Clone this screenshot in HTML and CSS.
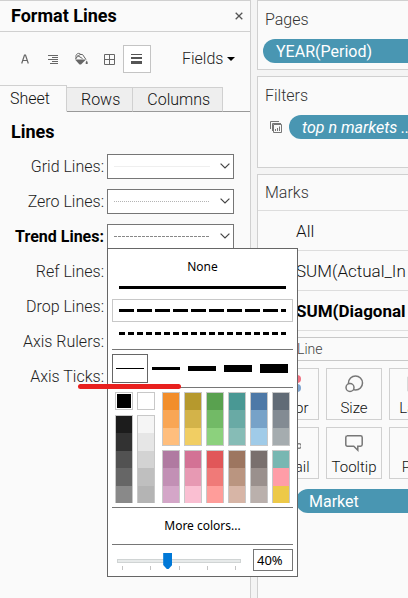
FILE: index.html
```html
<!DOCTYPE html>
<html lang="en">
<head>
<meta charset="utf-8">
<meta name="viewport" content="width=device-width, initial-scale=1">
<title>Format Lines</title>
<link rel="stylesheet" href="styles.css">
</head>
<body>
<svg class="defs" aria-hidden="true">
  <symbol id="chevron" viewBox="0 0 10 6"><path d="M.6 .6 5 5 9.400 .6" fill="none" stroke="#444" stroke-width="1.200"/></symbol>
</svg>
<main class="app">
  <section class="format">
    <header class="format-head">
      <h1>Format Lines</h1>
      <button class="close" aria-label="Close"><svg width="8" height="8" viewBox="0 0 8 8"><path d="M.7.7 7.300 7.300M7.300.7.7 7.300" stroke="#555" stroke-width="1.300"/></svg></button>
    </header>
    <div class="toolbar">
      <button class="tool" aria-label="Font"><svg width="14" height="14" viewBox="0 0 14 14"><path d="M3.700 11.500 6.500 3h1l2.800 8.500M4.600 8.500h4.800" fill="none" stroke="#666" stroke-width="1.200"/></svg></button>
      <button class="tool" aria-label="Alignment"><svg width="14" height="14" viewBox="0 0 14 14"><path d="M2 3.500h10M6 5.500h6M2 7.500h10M6 9.500h6M4 11.500h8" stroke="#666"/></svg></button>
      <button class="tool" aria-label="Shading"><svg width="14" height="14" viewBox="0 0 14 14"><path d="M1 7.500h11L7 12.500 5.500 12.500Z" fill="#666"/><path d="M2 7V3.500C3 .8 6 .8 7 2.800M1.500 6.500 6 2.500h2.500L12 7.500M3.500 3.500l5 3" fill="none" stroke="#666"/><path d="M12.700 8.500q2.200 3.500 0 3.500t0-3.500" fill="#666"/></svg></button>
      <button class="tool" aria-label="Borders"><svg width="14" height="14" viewBox="0 0 14 14"><path d="M2.500 2.500h10v10h-10zM7.500 2.500v10M2.500 7.500h10" fill="none" stroke="#666"/></svg></button>
      <button class="tool active" aria-label="Lines"><svg width="14" height="14" viewBox="0 0 14 14"><path d="M1 2h11v1H1zM1 5h11v2H1zM1 9h11v3H1z" fill="#555"/></svg></button>
      <button class="fields">Fields<svg width="8" height="4" viewBox="0 0 8 4"><path d="M0 0h8L4 4z"/></svg></button>
    </div>
    <nav class="tabs">
      <button class="tab current">Sheet</button>
      <button class="tab">Rows</button>
      <button class="tab">Columns</button>
      <span class="tab-rest"></span>
    </nav>
    <h2>Lines</h2>
    <div class="rows">
      <div class="row"><label for="grid">Grid Lines:</label>
        <div class="combo"><select id="grid"><option aria-label="Automatic"></option></select><i class="sample solid"></i><svg class="chev"><use href="#chevron"/></svg></div></div>
      <div class="row"><label for="zero">Zero Lines:</label>
        <div class="combo"><select id="zero"><option aria-label="Dotted"></option></select><i class="sample dotted"></i><svg class="chev"><use href="#chevron"/></svg></div></div>
      <div class="row"><label for="trend" class="strong">Trend Lines:</label>
        <div class="combo"><select id="trend"><option aria-label="Dashed"></option></select><i class="sample dashed"></i><svg class="chev"><use href="#chevron"/></svg>
          <div class="popup">
            <button class="none">None</button>
            <button class="style" aria-label="Solid"><i class="rule"></i></button>
            <button class="style picked" aria-label="Dashed"><i class="rule dash"></i></button>
            <button class="style" aria-label="Dotted"><i class="rule dot"></i></button>
            <hr>
            <div class="weights">
              <button class="picked" aria-label="Weight 1"><i class="w1"></i></button>
              <button aria-label="Weight 2"><i class="w2"></i></button>
              <button aria-label="Weight 3"><i class="w3"></i></button>
              <button aria-label="Weight 4"><i class="w4"></i></button>
              <button aria-label="Weight 5"><i class="w5"></i></button>
            </div>
            <hr>
            <div class="palette">
              <div class="grays">
                <button class="chip black" aria-label="Black"></button>
                <button class="chip" aria-label="White"></button>
                <div class="strip open"><b class="k1"></b><b class="k2"></b><b class="k3"></b><b class="k4"></b><b class="k5"></b></div>
                <div class="strip open"><b class="l1"></b><b class="l2"></b><b class="l3"></b><b class="l4"></b><b class="l5"></b></div>
              </div>
              <div class="hues">
                <div class="strip"><b class="or1"></b><b class="or2"></b><b class="or3"></b></div>
                <div class="strip"><b class="ye1"></b><b class="ye2"></b><b class="ye3"></b></div>
                <div class="strip"><b class="gr1"></b><b class="gr2"></b><b class="gr3"></b></div>
                <div class="strip"><b class="te1"></b><b class="te2"></b><b class="te3"></b></div>
                <div class="strip"><b class="bl1"></b><b class="bl2"></b><b class="bl3"></b></div>
                <div class="strip"><b class="sl1"></b><b class="sl2"></b><b class="sl3"></b></div>
                <div class="strip open"><b class="pu1"></b><b class="pu2"></b><b class="pu3"></b></div>
                <div class="strip open"><b class="pi1"></b><b class="pi2"></b><b class="pi3"></b></div>
                <div class="strip open"><b class="re1"></b><b class="re2"></b><b class="re3"></b></div>
                <div class="strip open"><b class="br1"></b><b class="br2"></b><b class="br3"></b></div>
                <div class="strip open"><b class="ta1"></b><b class="ta2"></b><b class="ta3"></b></div>
                <div class="strip open"><b class="mx1"></b><b class="mx2"></b><b class="mx3"></b></div>
              </div>
            </div>
            <hr>
            <button class="more">More colors...</button>
            <hr>
            <div class="opacity">
              <div class="slider">
                <input type="range" min="0" max="100" value="40" aria-label="Opacity">
                <div class="ticks"><i></i><i></i><i></i><i></i><i></i></div>
              </div>
              <input class="percent" type="text" value="40%" aria-label="Opacity percent">
            </div>
            <span class="underline"></span>
          </div>
        </div></div>
      <div class="row"><label for="ref">Ref Lines:</label>
        <div class="combo"><select id="ref"><option aria-label="Automatic"></option></select></div></div>
      <div class="row"><label for="drop">Drop Lines:</label>
        <div class="combo"><select id="drop"><option aria-label="Automatic"></option></select></div></div>
      <div class="row"><label for="rulers">Axis Rulers:</label>
        <div class="combo"><select id="rulers"><option aria-label="Automatic"></option></select></div></div>
      <div class="row"><label for="axis">Axis Ticks:</label>
        <div class="combo"><select id="axis"><option aria-label="Automatic"></option></select></div></div>
    </div>
  </section>
  <aside class="shelves">
    <section class="card pages">
      <h3>Pages</h3>
      <div class="pill">YEAR(Period)</div>
    </section>
    <section class="card filters">
      <h3>Filters</h3>
      <div class="filter">
        <svg width="12" height="12" viewBox="0 0 12 12"><path d="M.5 8V.5H9M2.500 10V2.500H11" fill="none" stroke="#777"/><path d="M3.500 3.500h8v8h-8zM5.500 10V8M7.500 10V7M9.500 10V5.500" fill="none" stroke="#777"/></svg>
        <div class="pill italic">top n markets ...</div>
      </div>
    </section>
    <section class="card marks">
      <h3>Marks</h3>
      <button class="mark">All</button>
      <button class="mark">SUM(Actual_In</button>
      <button class="mark strong">SUM(Diagonal</button>
      <select class="type" aria-label="Mark type"><option>Line</option></select>
      <div class="tiles">
        <button class="tile"><svg width="20" height="20" viewBox="0 0 20 20"><circle cx="5" cy="5" r="4" fill="#f4a259"/><circle cx="16" cy="5" r="4" fill="#f07182"/><circle cx="5" cy="15" r="4" fill="#6aaf6a"/><circle cx="16" cy="14" r="4" fill="#7da3d0"/></svg>Color</button>
        <button class="tile"><svg width="20" height="20" viewBox="0 0 20 20"><circle cx="11.500" cy="9" r="7" fill="none" stroke="#777" stroke-width="1.500"/><circle cx="6" cy="13.500" r="4" fill="#fafafa" stroke="#777" stroke-width="1.500"/></svg>Size</button>
        <button class="tile"><svg width="20" height="20" viewBox="0 0 20 20"><path d="M1.500 3.500h17v13h-17z" fill="none" stroke="#777" stroke-width="1.500"/></svg>Label</button>
        <button class="tile"><svg width="20" height="20" viewBox="0 0 20 20"><circle cx="5" cy="6" r="2.500" fill="none" stroke="#777" stroke-width="1.200"/><circle cx="12" cy="6" r="2.500" fill="none" stroke="#777" stroke-width="1.200"/><circle cx="18" cy="13" r="2.300" fill="none" stroke="#777" stroke-width="1.200"/></svg>Detail</button>
        <button class="tile"><svg width="20" height="20" viewBox="0 0 20 20"><path d="M3 2.800h13.500q1.700 0 1.700 1.700v7q0 1.700-1.700 1.700h-2.700v4l-4-4H3.500q-1.700 0-1.700-1.700v-7Q1.800 2.800 3.500 2.800Z" fill="none" stroke="#777" stroke-width="1.500"/></svg>Tooltip</button>
        <button class="tile"><svg width="20" height="20" viewBox="0 0 20 20"><path d="M2 13.500 7 10l5 3 6-9" fill="none" stroke="#777" stroke-width="1.500"/></svg>Path</button>
      </div>
      <div class="pill market">Market</div>
    </section>
  </aside>
</main>
</body>
</html>
```
FILE: styles.css
```css
* { box-sizing: border-box; }
body { margin: 0; background: #f4f4f4; color: #222; font: 300 16px/20px Roboto, "Liberation Sans", sans-serif; }
button, select, input { font: inherit; color: inherit; margin: 0; padding: 0; border: 0; background: none; border-radius: 0; }
h1, h2, h3 { margin: 0; font-size: 16px; line-height: 20px; }
svg { display: block; flex: none; }
.defs { position: absolute; width: 0; height: 0; }
.app { display: flex; gap: 6px; min-height: 100vh; overflow: hidden; }
.strong { font-weight: 700; color: #000; }

.format { flex: 0 0 251px; background: #fafafa; border: solid #d0d0d0; border-width: 1px 1px 0 0; }
.format-head { display: flex; align-items: center; justify-content: space-between; height: 31px; padding: 0 7px 0 11px; border-bottom: 1px solid #d0d0d0; }
h1, h2 { font-size: 18px; font-weight: 700; color: #000; }
.toolbar { display: flex; align-items: center; height: 53px; padding-left: 11px; }
.tool { width: 28px; height: 28px; display: grid; place-items: center; border: 1px solid transparent; }
.tool.active { border-color: #c4c4c4; background: #fff; }
.fields { display: flex; align-items: center; gap: 4px; margin-left: 31px; }

.tabs { display: flex; align-items: flex-end; height: 27px; }
.tab { height: 25px; padding: 0 12px 0 14px; background: #eee; border: solid #d0d0d0; border-width: 1px 1px 1px 0; border-bottom-color: #999; color: #111; }
.tab.current { height: 27px; padding: 0 16px 0 10px; background: #fafafa; border-bottom-color: #fafafa; }
.tab-rest { flex: 1; border-bottom: 1px solid #999; }
h2 { padding: 10px 11px 12px; }

.rows { display: grid; gap: 10px; }
.row { display: flex; align-items: center; height: 25px; padding-right: 16px; }
.row label { flex: 1; text-align: right; line-height: 25px; padding-right: 3px; white-space: nowrap; }
.combo { position: relative; flex: 0 0 127px; height: 25px; }
.combo select { appearance: none; display: block; width: 100%; height: 25px; border: 1px solid #767676; background: #fff; }
.sample { position: absolute; left: 7px; right: 24px; top: 12px; height: 1px; pointer-events: none; }
.sample.solid { background: #efefef; }
.sample.dotted { background: repeating-linear-gradient(90deg, #b4b4b4 0 1px, transparent 1px 2px); }
.sample.dashed { background: repeating-linear-gradient(90deg, #888 0 3px, transparent 3px 4px); }
.chev { position: absolute; right: 4px; top: 9px; width: 10px; height: 6px; pointer-events: none; }

.popup { position: absolute; z-index: 5; left: 0; top: 24px; width: 191px; padding: 6px 4px 5px; background: #fff; border: 1px solid #666; color: #000; font: 400 12px/16px "Noto Sans", sans-serif; }
.popup button { display: block; }
.popup hr { margin: 0; border: 0; border-top: 1px solid #767676; }
.none, .more { width: 100%; }
.popup .none { height: 21px; padding-top: 2px; }
.style { width: 100%; height: 23px; padding: 0 6px; border: 1px solid transparent; }
.popup .style { padding: 0 6px; }
.style.picked { border-color: #c8c8c8; }
.rule { display: block; height: 3px; background: #000; }
.rule.dash { background: repeating-linear-gradient(90deg, #000 0 15px, transparent 15px 18px); }
.rule.dot { background: repeating-linear-gradient(90deg, #000 0 6px, transparent 6px 9px); }
.style + hr { margin-top: 4px; }
.weights { display: flex; height: 37px; padding: 4px 0; }
.weights button { flex: 0 0 36px; padding: 0 3px; border: 1px solid transparent; }
.weights .picked { border-color: #666; }
.weights i { display: block; background: #000; }
.w1 { height: 1px; } .w2 { height: 3px; } .w3 { height: 5px; } .w4 { height: 7px; } .w5 { height: 9px; }

.palette { display: flex; gap: 7px; height: 119px; padding: 4px 3px; }
.grays { display: grid; grid-template-columns: 18px 18px; grid-template-rows: 18px 88px; gap: 5px 4px; }
.hues { display: grid; grid-template-columns: repeat(6, 18px); grid-template-rows: 54px 53px; gap: 4px; }
.popup .chip { border: 1px solid #c8c8c8; }
.popup .black { background: #000; background-clip: content-box; padding: 1px; }
.strip { display: flex; flex-direction: column; border: 1px solid #c8c8c8; }
.strip.open { border-bottom: 0; }
.strip b { flex: 1; }
.k1 { background: #1c1c1c; } .k2 { background: #323232; } .k3 { background: #525252; } .k4 { background: #666; } .k5 { background: #898989; }
.l1 { background: #f5f5f5; } .l2 { background: #e6e6e6; } .l3 { background: #d3d3d3; } .l4 { background: #bfbfbf; } .l5 { background: #b4b4b4; }
.or1 { background: #f28e2b; } .or2 { background: #f9a655; } .or3 { background: #ffbe7d; }
.ye1 { background: #b6992d; } .ye2 { background: #d3b349; } .ye3 { background: #f1ce63; }
.gr1 { background: #59a14f; } .gr2 { background: #72ba66; } .gr3 { background: #8cd17d; }
.te1 { background: #499894; } .te2 { background: #69aaa5; } .te3 { background: #86bcb6; }
.bl1 { background: #4e79a7; } .bl2 { background: #77a2c8; } .bl3 { background: #a0cbe8; }
.sl1 { background: #616b76; } .sl2 { background: #838b93; } .sl3 { background: #a5acaf; }
.pu1 { background: #b07aa1; } .pu2 { background: #c290b5; } .pu3 { background: #d4a6c8; }
.pi1 { background: #d37295; } .pi2 { background: #e799b3; } .pi3 { background: #fabfd2; }
.re1 { background: #e15759; } .re2 { background: #f07a78; } .re3 { background: #ff9d9a; }
.br1 { background: #9d7660; } .br2 { background: #ba9580; } .br3 { background: #d7b5a6; }
.ta1 { background: #79706e; } .ta2 { background: #9a908d; } .ta3 { background: #bab0ac; }
.mx1 { background: #78b7b2; } .mx2 { background: #ff9da7; } .mx3 { background: #edc948; }

.more { height: 36px; }
.opacity { display: flex; justify-content: space-between; align-items: flex-start; padding-top: 4px; }
.slider { width: 124px; margin-left: 5px; padding-top: 4px; }
.slider input { display: block; appearance: none; width: 100%; height: 16px; position: relative; z-index: 1; }
.slider input::-webkit-slider-runnable-track { height: 4px; background: #e7eaea; border: 1px solid #d0d4d4; }
.slider input::-webkit-slider-thumb { appearance: none; width: 9px; height: 16px; margin-top: -7px; background: #0078d7; clip-path: polygon(0 0, 100% 0, 100% 75%, 60% 100%, 40% 100%, 0 75%); }
.ticks { display: flex; justify-content: space-between; padding: 0 5px; height: 4px; margin-top: -3px; }
.ticks i { width: 1px; background: #c4c4c4; }
.percent { width: 40px; height: 22px; padding: 0 3px; border: 1px solid #767676; font-size: 13px; }
.underline { position: absolute; left: -30px; top: 135px; width: 103px; height: 5px; border-radius: 3px; background: #e8201e; }

.shelves { flex: 1 1 0; min-width: 0; display: flex; flex-direction: column; gap: 6px; white-space: nowrap; }
.card { background: #fafafa; border: solid #d0d0d0; border-width: 1px 0 1px 1px; overflow: hidden; }
.card h3 { padding-left: 7px; font-weight: 300; color: #333; }
.pill { height: 24px; padding-left: 13px; border-radius: 12px 0 0 12px; background: #4996b2; color: #fff; font-weight: 400; line-height: 25px; }
.pages { padding: 9px 0 6px; }
.pages .pill { margin: 9px 0 0 5px; }
.filters { padding: 9px 0 28px; }
.filter { display: flex; align-items: center; gap: 7px; margin-top: 9px; padding-left: 12px; }
.filter .pill { flex: 1; min-width: 0; overflow: hidden; }
.italic { font-style: italic; }
.marks { flex: 1; border-bottom: 0; }
.marks h3 { height: 36px; line-height: 36px; border-bottom: 1px solid #ddd; }
.mark { display: block; width: 100%; height: 40px; padding-left: 38px; text-align: left; border-bottom: 1px solid #ddd; color: #111; font-size: 17px; }
.mark.strong { color: #000; }
.type { appearance: none; display: block; width: calc(100% - 5px); height: 24px; margin: 6px 0 7px 5px; padding-left: 33px; border: solid #c8c8c8; border-width: 1px 0 1px 1px; font-size: 14px; color: #444; }
.tiles { display: grid; grid-template-columns: repeat(3, 56px); gap: 7px; margin-left: 5px; }
.tile { height: 52px; display: flex; flex-direction: column; align-items: center; padding-top: 5px; border: 1px solid #d0d0d0; font-size: 15px; color: #111; }
.tile svg { margin-bottom: 4px; }
.market { margin: 10px 0 0 38px; }
```
